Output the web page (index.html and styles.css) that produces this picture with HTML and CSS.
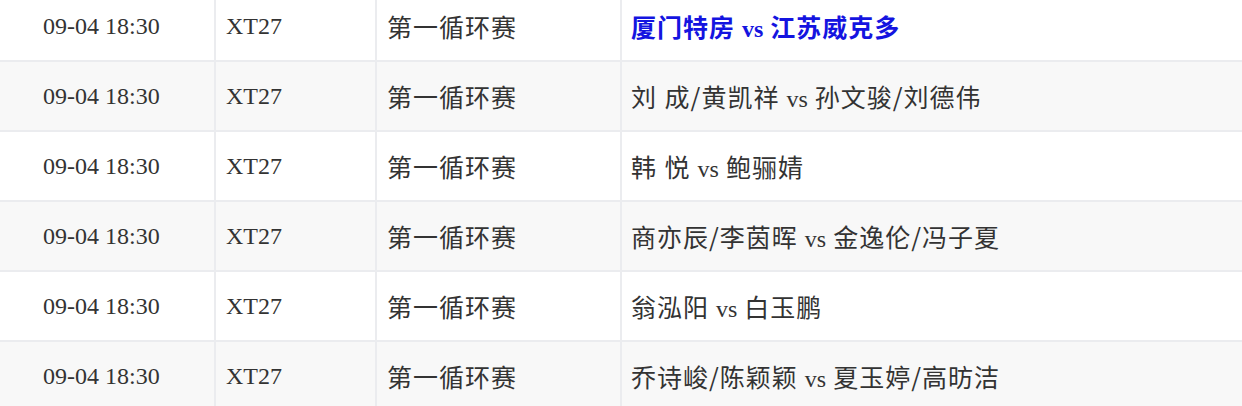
FILE: index.html
```html
<!DOCTYPE html>
<html lang="zh-CN">
<head>
<meta charset="utf-8">
<title>赛程</title>
<link rel="stylesheet" href="styles.css">
</head>
<body>
<table class="schedule">
  <colgroup>
    <col class="c-time"><col class="c-code"><col class="c-stage"><col class="c-match">
  </colgroup>
  <tbody>
    <tr><td class="time">09-04 18:30</td><td>XT27</td><td><span class="zh">第一循环赛</span></td><td><a class="team" href="#"><span class="zh">厦门特房</span> vs <span class="zh">江苏威克多</span></a></td></tr>
    <tr><td class="time">09-04 18:30</td><td>XT27</td><td><span class="zh">第一循环赛</span></td><td><span class="zh">刘 成/黄凯祥</span> vs <span class="zh">孙文骏/刘德伟</span></td></tr>
    <tr><td class="time">09-04 18:30</td><td>XT27</td><td><span class="zh">第一循环赛</span></td><td><span class="zh">韩 悦</span> vs <span class="zh">鲍骊婧</span></td></tr>
    <tr><td class="time">09-04 18:30</td><td>XT27</td><td><span class="zh">第一循环赛</span></td><td><span class="zh">商亦辰/李茵晖</span> vs <span class="zh">金逸伦/冯子夏</span></td></tr>
    <tr><td class="time">09-04 18:30</td><td>XT27</td><td><span class="zh">第一循环赛</span></td><td><span class="zh">翁泓阳</span> vs <span class="zh">白玉鹏</span></td></tr>
    <tr><td class="time">09-04 18:30</td><td>XT27</td><td><span class="zh">第一循环赛</span></td><td><span class="zh">乔诗峻/陈颖颖</span> vs <span class="zh">夏玉婷/高昉洁</span></td></tr>
  </tbody>
</table>
</body>
</html>
```
FILE: styles.css
```css
html, body {
  margin: 0;
  padding: 0;
  background: #ffffff;
}
body {
  font-family: "Liberation Serif", "Noto Sans CJK SC", serif;
  font-size: 24px;
  color: #333333;
  overflow: hidden;
}
.schedule {
  width: 1242px;
  margin-top: -8px;
  border-collapse: separate;
  border-spacing: 0;
  table-layout: fixed;
}
.c-time { width: 216px; }
.c-code { width: 161px; }
.c-stage { width: 245px; }
.c-match { width: auto; }
.schedule td {
  box-sizing: border-box;
  height: 70px;
  padding: 0 10px;
  vertical-align: middle;
  white-space: nowrap;
  border-right: 2px solid #ebecef;
  border-bottom: 2px solid #ebecef;
}
.schedule td:last-child {
  border-right: none;
  padding-left: 9px;
}
.schedule td.time {
  padding-left: 43px;
}
.schedule tr:nth-child(even) td {
  background: #f8f8f8;
}
.zh {
  font-family: "Noto Sans CJK SC", "Liberation Serif", sans-serif;
  font-size: 25px;
  letter-spacing: 1px;
}
.schedule td:last-child {
  word-spacing: 1px;
}
.team {
  color: #1414e0;
  font-weight: bold;
  text-decoration: none;
}
```
